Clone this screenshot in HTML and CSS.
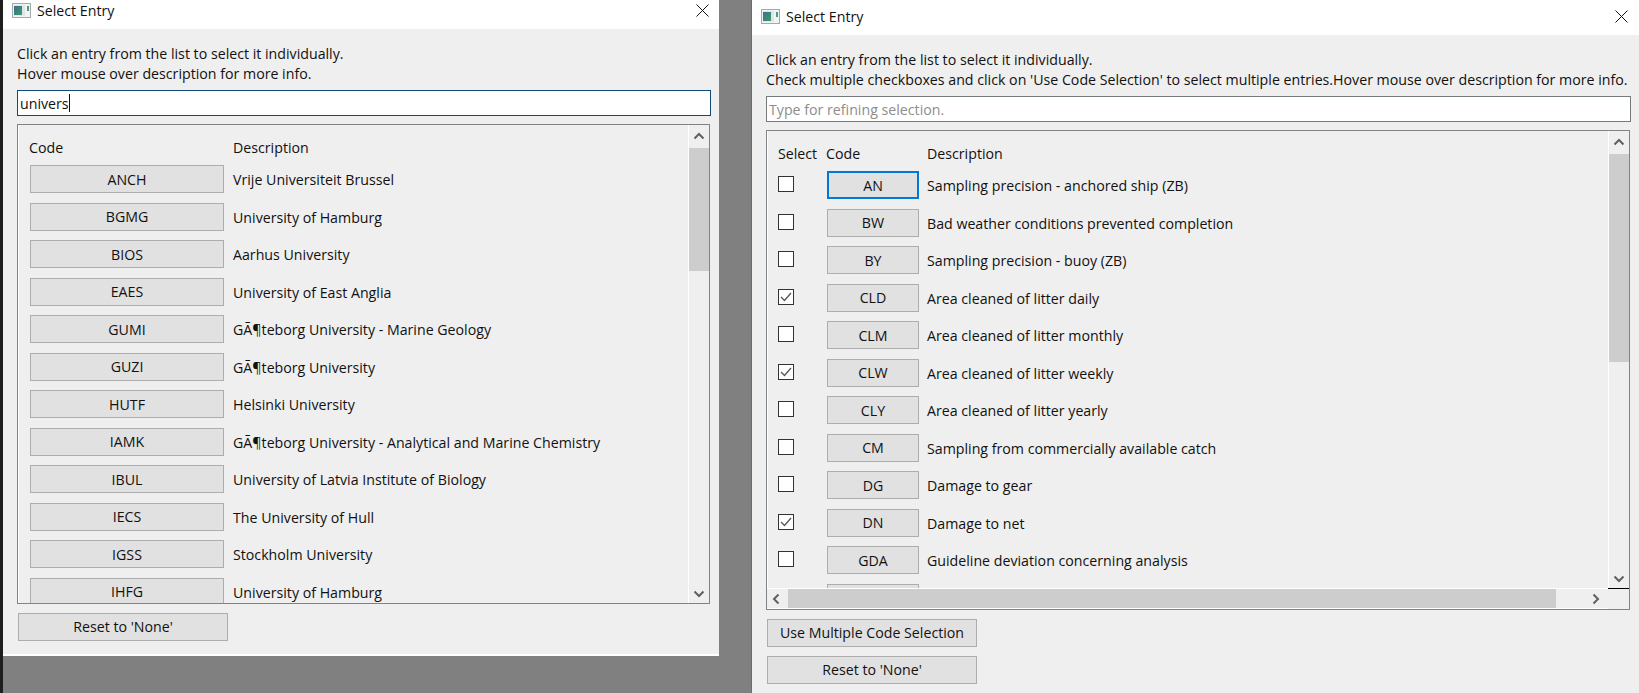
FILE: index.html
```html
<!DOCTYPE html>
<html lang="en">
<head>
<meta charset="utf-8">
<title>Select Entry</title>
<link rel="stylesheet" href="styles.css">
</head>
<body>
<div class="desktop">
  <section class="window window-left">
    <header class="titlebar">
      <svg class="app-icon" width="19" height="15" viewBox="0 0 19 15"><defs><linearGradient id="paneA" x1="0" y1="0" x2="1" y2="1"><stop offset="0" stop-color="#3f6f8a"/><stop offset="1" stop-color="#3c9a6f"/></linearGradient></defs><rect x=".5" y=".5" width="18" height="14" fill="#f2f3f3" stroke="#a3a8a8"/><rect x="2" y="2" width="11" height="11" fill="#dfe6e6"/><rect x="2" y="3" width="8" height="9" fill="url(#paneA)"/><rect x="15" y="3" width="2" height="5" fill="#4d9a86"/></svg>
      <span class="title">Select Entry</span>
      <svg class="close" width="13" height="13" viewBox="0 0 13 13"><path d="M.5.5l12 12M12.500.5l-12 12" stroke="#111" fill="none"/></svg>
    </header>
    <div class="body">
      <p class="hint">Click an entry from the list to select it individually.<br>Hover mouse over description for more info.</p>
      <div class="input focused"><span>univers</span><i class="caret"></i></div>
      <div class="scroller">
        <div class="list">
          <div class="row head"><span class="code-col">Code</span><span class="desc">Description</span></div>
          <div class="row"><button class="btn code-col">ANCH</button><span class="desc">Vrije Universiteit Brussel</span></div>
          <div class="row"><button class="btn code-col">BGMG</button><span class="desc">University of Hamburg</span></div>
          <div class="row"><button class="btn code-col">BIOS</button><span class="desc">Aarhus University</span></div>
          <div class="row"><button class="btn code-col">EAES</button><span class="desc">University of East Anglia</span></div>
          <div class="row"><button class="btn code-col">GUMI</button><span class="desc">GÃ¶teborg University - Marine Geology</span></div>
          <div class="row"><button class="btn code-col">GUZI</button><span class="desc">GÃ¶teborg University</span></div>
          <div class="row"><button class="btn code-col">HUTF</button><span class="desc">Helsinki University</span></div>
          <div class="row"><button class="btn code-col">IAMK</button><span class="desc">GÃ¶teborg University - Analytical and Marine Chemistry</span></div>
          <div class="row"><button class="btn code-col">IBUL</button><span class="desc">University of Latvia Institute of Biology</span></div>
          <div class="row"><button class="btn code-col">IECS</button><span class="desc">The University of Hull</span></div>
          <div class="row"><button class="btn code-col">IGSS</button><span class="desc">Stockholm University</span></div>
          <div class="row"><button class="btn code-col">IHFG</button><span class="desc">University of Hamburg</span></div>
        </div>
        <div class="vbar">
          <svg class="arrow" width="12" height="8" viewBox="0 0 12 8"><path d="M1.500 6.500L6 2l4.500 4.500" stroke="#606060" stroke-width="2" fill="none"/></svg>
          <div class="vtrack"><div class="vthumb"></div></div>
          <svg class="arrow" width="12" height="8" viewBox="0 0 12 8"><path d="M1.500 1.500L6 6l4.500-4.500" stroke="#606060" stroke-width="2" fill="none"/></svg>
        </div>
      </div>
      <div class="actions"><button class="btn action">Reset to 'None'</button></div>
    </div>
  </section>

  <section class="window window-right">
    <header class="titlebar">
      <svg class="app-icon" width="19" height="15" viewBox="0 0 19 15"><defs><linearGradient id="paneB" x1="0" y1="0" x2="1" y2="1"><stop offset="0" stop-color="#3f6f8a"/><stop offset="1" stop-color="#3c9a6f"/></linearGradient></defs><rect x=".5" y=".5" width="18" height="14" fill="#f2f3f3" stroke="#a3a8a8"/><rect x="2" y="2" width="11" height="11" fill="#dfe6e6"/><rect x="2" y="3" width="8" height="9" fill="url(#paneB)"/><rect x="15" y="3" width="2" height="5" fill="#4d9a86"/></svg>
      <span class="title">Select Entry</span>
      <svg class="close" width="13" height="13" viewBox="0 0 13 13"><path d="M.5.5l12 12M12.500.5l-12 12" stroke="#111" fill="none"/></svg>
    </header>
    <div class="body">
      <p class="hint">Click an entry from the list to select it individually.<br>Check multiple checkboxes and click on 'Use Code Selection' to select multiple entries.Hover mouse over description for more info.</p>
      <div class="input"><span class="placeholder">Type for refining selection.</span></div>
      <div class="scroller scroller-h">
        <div class="list">
          <div class="row head"><span class="sel-col">Select</span><span class="code-col">Code</span><span class="desc">Description</span></div>
          <div class="row"><span class="sel-col"><i class="check"></i></span><button class="btn code-col current">AN</button><span class="desc">Sampling precision - anchored ship (ZB)</span></div>
          <div class="row"><span class="sel-col"><i class="check"></i></span><button class="btn code-col">BW</button><span class="desc">Bad weather conditions prevented completion</span></div>
          <div class="row"><span class="sel-col"><i class="check"></i></span><button class="btn code-col">BY</button><span class="desc">Sampling precision - buoy (ZB)</span></div>
          <div class="row"><span class="sel-col"><i class="check"><svg width="14" height="14" viewBox="0 0 14 14"><path d="M2 7l3.500 3.500L12 3" stroke="#555" stroke-width="1.300" fill="none"/></svg></i></span><button class="btn code-col">CLD</button><span class="desc">Area cleaned of litter daily</span></div>
          <div class="row"><span class="sel-col"><i class="check"></i></span><button class="btn code-col">CLM</button><span class="desc">Area cleaned of litter monthly</span></div>
          <div class="row"><span class="sel-col"><i class="check"><svg width="14" height="14" viewBox="0 0 14 14"><path d="M2 7l3.500 3.500L12 3" stroke="#555" stroke-width="1.300" fill="none"/></svg></i></span><button class="btn code-col">CLW</button><span class="desc">Area cleaned of litter weekly</span></div>
          <div class="row"><span class="sel-col"><i class="check"></i></span><button class="btn code-col">CLY</button><span class="desc">Area cleaned of litter yearly</span></div>
          <div class="row"><span class="sel-col"><i class="check"></i></span><button class="btn code-col">CM</button><span class="desc">Sampling from commercially available catch</span></div>
          <div class="row"><span class="sel-col"><i class="check"></i></span><button class="btn code-col">DG</button><span class="desc">Damage to gear</span></div>
          <div class="row"><span class="sel-col"><i class="check"><svg width="14" height="14" viewBox="0 0 14 14"><path d="M2 7l3.500 3.500L12 3" stroke="#555" stroke-width="1.300" fill="none"/></svg></i></span><button class="btn code-col">DN</button><span class="desc">Damage to net</span></div>
          <div class="row"><span class="sel-col"><i class="check"></i></span><button class="btn code-col">GDA</button><span class="desc">Guideline deviation concerning analysis</span></div>
          <div class="row"><span class="sel-col"></span><button class="btn code-col"></button></div>
        </div>
        <div class="vbar">
          <svg class="arrow" width="12" height="8" viewBox="0 0 12 8"><path d="M1.500 6.500L6 2l4.500 4.500" stroke="#606060" stroke-width="2" fill="none"/></svg>
          <div class="vtrack"><div class="vthumb"></div></div>
          <svg class="arrow" width="12" height="8" viewBox="0 0 12 8"><path d="M1.500 1.500L6 6l4.500-4.500" stroke="#606060" stroke-width="2" fill="none"/></svg>
        </div>
        <div class="hbar">
          <svg class="arrow" width="8" height="12" viewBox="0 0 8 12"><path d="M6.500 1.500L2 6l4.500 4.500" stroke="#606060" stroke-width="2" fill="none"/></svg>
          <div class="hthumb"></div>
          <svg class="arrow" width="8" height="12" viewBox="0 0 8 12"><path d="M1.500 1.500L6 6l-4.500 4.500" stroke="#606060" stroke-width="2" fill="none"/></svg>
        </div>
        <div class="corner"></div>
      </div>
      <div class="actions"><button class="btn action">Use Multiple Code Selection</button><button class="btn action">Reset to 'None'</button></div>
    </div>
  </section>
</div>
</body>
</html>
```
FILE: styles.css
```css
* { box-sizing: border-box; }
html, body { margin: 0; height: 100%; overflow: hidden; }
body { background: #808080; font-family: "Open Sans", "Liberation Sans", sans-serif; font-size: 14.2px; color: #111; }
.desktop { display: flex; align-items: flex-start; width: 1639px; height: 693px; border-left: 3px solid #1e1e1e; }
.window { display: flex; flex-direction: column; background: #efefef; }
.window-left { width: 716px; height: 656px; border-bottom: 2px solid #fff; }
.window-right { width: 887px; height: 693px; margin-left: 33px; box-shadow: -1px 0 0 #6c6c6c; }
.titlebar { display: flex; align-items: center; background: #fff; flex: none; padding-left: 9px; padding-right: 10px; }
.window-left .titlebar { height: 29px; padding-bottom: 8px; }
.window-right .titlebar { height: 35px; padding-right: 11px; padding-bottom: 2px; }
.app-icon { flex: none; margin-right: 6px; }
.title { flex: 1; }
.close { flex: none; }
.body { display: flex; flex-direction: column; flex: 1; padding: 0 8px 0 14px; min-height: 0; }
.hint { margin: 15px 0 0; font-size: inherit; line-height: 20px; white-space: nowrap; height: 40px; }
.input { flex: none; display: flex; align-items: center; height: 26px; margin-top: 6px; padding-left: 2px; background: #fff; border: 1px solid #767b7e; white-space: nowrap; }
.input.focused { border-color: #0f4a7d; }
.caret { display: inline-block; width: 1px; height: 18px; background: #111; }
.placeholder { color: #8d8d8d; }
.scroller { flex: none; display: grid; grid-template-columns: minmax(0, 1fr) 21px; grid-template-rows: minmax(0, 1fr); height: 480px; margin-top: 8px; margin-right: 1px; border: 1px solid #7f8488; overflow: hidden; }
.scroller-h { grid-template-rows: minmax(0, 1fr) 21px; }
.list { display: flex; flex-direction: column; gap: 9.500px; padding: 12px 0 0 11px; overflow: hidden; min-height: 0; border-left: 1px solid #fff; }
.window-right .list { padding-left: 10px; }
.row { display: flex; align-items: center; flex: none; height: 28px; }
.row.head { height: 20px; margin-bottom: -1.500px; }
.head .code-col { text-indent: -1px; }
.sel-col { flex: none; width: 49px; display: flex; align-items: center; }
.code-col { flex: none; width: 194px; }
.window-right .code-col { width: 92px; }
.desc { margin-left: 9px; padding-top: 1px; white-space: nowrap; }
.window-right .desc { margin-left: 8px; }
.head .desc { padding-top: 0; }
.btn { height: 28px; padding: 0; background: #e1e1e1; border: 1px solid #adadad; font: inherit; color: #111; text-align: center; }
.btn.current { border: 2px solid #0078d7; }
.check { display: block; width: 16px; height: 16px; margin-top: -2px; background: #fff; border: 1px solid #333; }
.check svg { display: block; }
.vbar { display: flex; flex-direction: column; align-items: center; border-left: 1px solid #fff; padding-top: 7px; padding-bottom: 5px; min-height: 0; }
.vtrack { flex: 1; width: 100%; margin-top: 8px; margin-bottom: 7px; min-height: 0; }
.vthumb { width: 100%; background: #cdcdcd; }
.window-left .vthumb { height: 123px; }
.window-right .vthumb { height: 208px; }
.hbar { display: flex; align-items: center; min-width: 0; border-top: 1px solid #fff; border-bottom: 1px solid #fff; }
.hbar .arrow { flex: none; }
.hbar .arrow:first-child { margin: 0 8px 0 5px; }
.hbar .arrow:last-child { margin-left: 36px; }
.hthumb { flex: none; height: 100%; width: 768px; background: #cdcdcd; }
.corner { border-top: 1px solid #000; }
.actions { display: flex; flex-direction: column; gap: 9px; padding: 9px 0 0 1px; }
.action { width: 210px; flex: none; padding-bottom: 1px; }
```
